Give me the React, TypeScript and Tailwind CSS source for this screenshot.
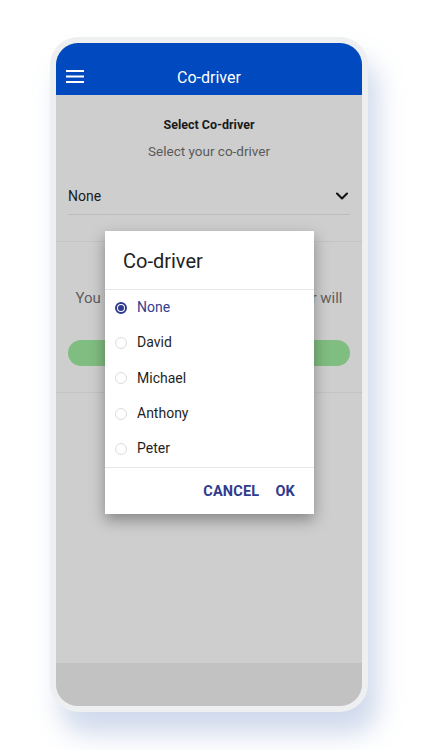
import { ChevronDown } from "lucide-react";

const drivers = ["None", "David", "Michael", "Anthony", "Peter"];

function Radio({ checked }: { checked: boolean }) {
  return checked ? (
    <span className="flex h-[12px] w-[12px] items-center justify-center rounded-full border-2 border-[#2f3b8f]">
      <span className="h-[6px] w-[6px] rounded-full bg-[#2f3b8f]" />
    </span>
  ) : (
    <span className="h-[12px] w-[12px] rounded-full border border-[#dcdcdc]" />
  );
}

function CoDriverDialog() {
  return (
    <div className="absolute left-[49px] top-[188px] w-[209px] bg-white shadow-[0_6px_14px_rgba(0,0,0,0.35)]">
      <div className="flex h-[59px] items-center border-b border-[#e6e6e6] px-[18px] pt-[2px] text-[20px] text-[#222]">
        Co-driver
      </div>
      <div className="flex flex-col pb-[1px]">
        {drivers.map((name, i) => (
          <div key={name} className="flex h-[35.3px] items-center gap-[10px] pl-[10px]">
            <Radio checked={i === 0} />
            <span
              className={`text-[14px] ${
                i === 0 ? "text-[#34408f]" : "text-[#1f1f1f]"
              }`}
            >
              {name}
            </span>
          </div>
        ))}
      </div>
      <div className="flex h-[47px] items-center justify-end gap-[16px] border-t border-[#e6e6e6] pr-[19px] text-[14.5px] font-bold tracking-[0.2px] text-[#2f3b8f]">
        <span>CANCEL</span>
        <span>OK</span>
      </div>
    </div>
  );
}

export default function App() {
  return (
    <div className="h-[750px] w-[422px] overflow-hidden bg-white font-['Roboto',sans-serif]">
      <div className="ml-[50px] mt-[37px] h-[675px] w-[318px] rounded-[28px] bg-[#eeeff1] p-[6px] shadow-[10px_22px_26px_rgba(120,150,200,0.35)]">
        <div className="relative flex h-full flex-col overflow-hidden rounded-[22px] bg-[#cecece]">
          {/* Header */}
          <div className="relative flex h-[52px] shrink-0 items-center justify-center bg-[#0049bf]">
            <svg
              className="absolute left-[10px] top-[27px]"
              width="18"
              height="13"
              viewBox="0 0 18 13"
            >
              <rect x="0" y="0" width="18" height="2" fill="white" />
              <rect x="0" y="5.5" width="18" height="2" fill="white" />
              <rect x="0" y="11" width="18" height="2" fill="white" />
            </svg>
            <span className="mt-[17px] text-[16px] text-white">Co-driver</span>
          </div>

          {/* Content */}
          <div className="flex flex-1 flex-col">
            <div className="flex flex-col items-center pt-[21px]">
              <span className="text-[12.5px] font-bold text-[#1a1a1a]">
                Select Co-driver
              </span>
              <span className="mt-[6px] text-[13.5px] text-[#5a5a5a]">
                Select your co-driver
              </span>
            </div>
            <div className="mx-[12px] mt-[17px] flex h-[37px] items-center justify-between border-b border-[#bdbdbd]">
              <span className="text-[14px] text-[#1a1a1a]">None</span>
              <ChevronDown size={20} strokeWidth={2.5} className="mr-[-2px] text-[#111]" />
            </div>
            <div className="mt-[26px] border-t border-[#c4c4c4] px-[12px] pt-[45px]">
              <p className="whitespace-nowrap text-center text-[15px] text-[#5e5e5e]">
                You will be asked who your co-driver will
              </p>
              <div className="mt-[30px] h-[26px] rounded-full bg-[#80bd80]" />
            </div>
            <div className="mt-[26px] border-t border-[#c4c4c4]" />
          </div>

          {/* Bottom bar */}
          <div className="h-[43px] shrink-0 bg-[#c2c2c2]" />

          <CoDriverDialog />
        </div>
      </div>
    </div>
  );
}
